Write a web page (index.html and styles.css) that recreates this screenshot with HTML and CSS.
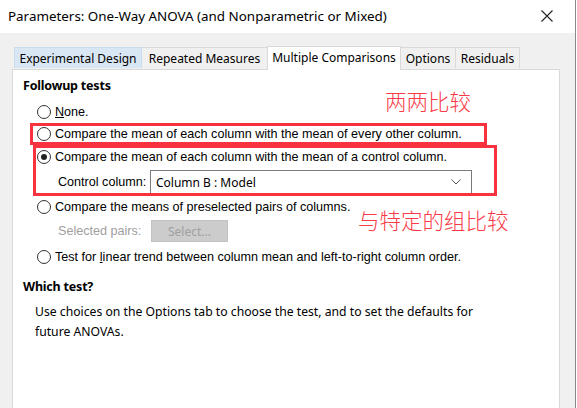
FILE: index.html
```html
<!DOCTYPE html>
<html lang="en">
  <head>
    <meta charset="UTF-8" />
    <title>Parameters: One-Way ANOVA</title>
    <link rel="stylesheet" href="styles.css">
  </head>
  <body>
    <div class="dialog">
      <div class="titlebar">
        <span class="title">Parameters: One-Way ANOVA (and Nonparametric or Mixed)</span>
        <svg class="close" width="12" height="12" viewBox="0 0 12 12">
          <path d="M0.5 0.5 L11.5 11.5 M11.5 0.5 L0.5 11.5" stroke="#222" stroke-width="1.1" fill="none" />
        </svg>
      </div>

      <div class="client">
        <!-- Onglets -->
        <div class="tabs">
          <div class="tab tab-hover tab-ed">Experimental Design</div>
          <div class="tab tab-rm">Repeated Measures</div>
          <div class="tab tab-active tab-mc">Multiple Comparisons</div>
          <div class="tab tab-op">Options</div>
          <div class="tab tab-re">Residuals</div>
        </div>

        <div class="panel">
          <h2 class="group-title">Followup tests</h2>

          <div class="option opt-none">
            <span class="radio"></span>
            <span class="label"><u>N</u>one.</span>
          </div>
          <div class="option opt-all">
            <span class="radio"></span>
            <span class="label">Compare the mean of each column with the mean of every other column.</span>
          </div>
          <div class="option opt-control">
            <span class="radio checked"></span>
            <span class="label">Compare the mean of each column with the mean of a control column.</span>
          </div>
          <div class="sub sub-control">
            <span class="sub-label">Control column:</span>
            <div class="select">
              <span>Column B : Model</span>
              <svg class="chevron" width="10" height="6" viewBox="0 0 10 6">
                <path d="M0.5 0.5 L5 5 L9.5 0.5" stroke="#555" stroke-width="1" fill="none" />
              </svg>
            </div>
          </div>
          <div class="option opt-pairs">
            <span class="radio"></span>
            <span class="label">Compare the means of preselected pairs of columns.</span>
          </div>
          <div class="sub sub-pairs">
            <span class="sub-label disabled">Selected pairs:</span>
            <div class="button-disabled">Select...</div>
          </div>
          <div class="option opt-trend">
            <span class="radio"></span>
            <span class="label">Test for <u>l</u>inear trend between column mean and left-to-right column order.</span>
          </div>

          <h2 class="group-title which">Which test?</h2>
          <p class="help">Use choices on the Options tab to choose the test, and to set the defaults for<br>future ANOVAs.</p>

          <!-- Annotations rouges -->
          <div class="mark mark-all"></div>
          <div class="mark mark-control"></div>
          <div class="note note-all">两两比较</div>
          <div class="note note-control">与特定的组比较</div>
        </div>
      </div>
    </div>
  </body>
</html>
```

FILE: styles.css
```css
* {
  margin: 0;
  padding: 0;
  box-sizing: border-box;
}

body {
  width: 577px;
  height: 408px;
  overflow: hidden;
  background: #fff;
  font-family: "Liberation Sans", Arial, sans-serif;
  color: #000;
}

.dialog {
  width: 576px;
  height: 408px;
  border-right: 1px solid #8a8a8a;
  display: flex;
  flex-direction: column;
}

/* Barre de titre */
.titlebar {
  height: 33px;
  flex-shrink: 0;
  background: #fff;
  display: flex;
  align-items: center;
  justify-content: space-between;
  padding: 0 22px 2px 8px;
}
.title {
  font-family: "Noto Sans", sans-serif;
  font-size: 13.4px;
  color: #000;
}

/* Zone client */
.client {
  flex-grow: 1;
  background: #f0f0f0;
  padding: 13px 0 0 12px;
  display: flex;
  flex-direction: column;
}

/* Onglets */
.tabs {
  display: flex;
  align-items: flex-end;
  padding-left: 2px;
  position: relative;
  z-index: 1;
}
.tab {
  height: 21px;
  margin-bottom: 1px;
  border: 1px solid #d9d9d9;
  border-bottom: none;
  border-left: none;
  background: #f0f0f0;
  font-family: "Noto Sans", sans-serif;
  font-size: 12px;
  display: flex;
  align-items: center;
  justify-content: center;
  color: #000;
}
.tab-ed { width: 128px; border-left: 1px solid #d9d9d9; }
.tab-rm { width: 126px; }
.tab-mc { width: 134px; }
.tab-op { width: 55px; }
.tab-re { width: 64px; }
.tab-hover {
  background: #d9e7f4;
  border-color: #c9dcee;
}
.tab-active {
  height: 24px;
  margin-bottom: -1px;
  background: #fff;
  border-left: 1px solid #d9d9d9;
  margin-left: -1px;
  align-items: flex-start;
  padding-top: 2px;
}

/* Panneau */
.panel {
  position: relative;
  width: 548px;
  flex-grow: 1;
  background: #fff;
  border: 1px solid #d9d9d9;
  border-bottom: none;
  padding: 6px 0 0 10px;
}

.group-title {
  font-family: "Noto Sans", sans-serif;
  font-size: 12.5px;
  font-weight: 700;
  height: 20px;
  line-height: 20px;
  letter-spacing: -0.2px;
}

.option {
  height: 22px;
  display: flex;
  align-items: center;
  margin-left: 14px;
  font-size: 12.6px;
}
.opt-none { margin-top: 5px; }
.opt-control { margin-top: 1px; }
.opt-pairs { margin-top: 2px; }
.opt-trend { margin-top: 4px; }

.radio {
  width: 14px;
  height: 14px;
  border: 1px solid #333;
  border-radius: 50%;
  background: #fff;
  margin-right: 4px;
  display: flex;
  align-items: center;
  justify-content: center;
  flex-shrink: 0;
}
.radio.checked::after {
  content: "";
  width: 6px;
  height: 6px;
  border-radius: 50%;
  background: #222;
}

.sub {
  display: flex;
  align-items: center;
  height: 24px;
  margin-left: 35px;
  font-size: 12.6px;
}
.sub-control { margin-top: 2px; }
.sub-pairs { margin-top: 2px; height: 22px; }
.sub-label {
  width: 92px;
  flex-shrink: 0;
}
.sub-label.disabled {
  color: #a0a0a0;
}

.select {
  width: 322px;
  height: 24px;
  border: 1px solid #7a7a7a;
  background: #fff;
  display: flex;
  align-items: center;
  justify-content: space-between;
  padding: 0 10px 0 5px;
  font-family: "Noto Sans", sans-serif;
  font-size: 12px;
}

.button-disabled {
  width: 77px;
  height: 22px;
  background: #cccccc;
  border: 1px solid #c2c2c2;
  color: #a0a0a0;
  font-family: "Noto Sans", sans-serif;
  font-size: 12px;
  display: flex;
  align-items: center;
  justify-content: center;
  margin-left: 1px;
}

.which {
  margin-top: 9px;
}

.help {
  margin: 5px 0 0 12px;
  font-family: "Noto Sans", sans-serif;
  font-size: 12.2px;
  line-height: 20px;
}

/* Cadres et notes rouges */
.mark {
  position: absolute;
  border: 3px solid #f8323f;
  pointer-events: none;
}
.mark-all {
  left: 17px;
  top: 53px;
  width: 457px;
  height: 22px;
}
.mark-control {
  left: 20px;
  top: 75px;
  width: 464px;
  height: 51px;
}
.note {
  position: absolute;
  font-family: "Noto Sans CJK SC", sans-serif;
  font-weight: 300;
  font-size: 21.5px;
  line-height: 24px;
  color: #fa3a47;
}
.note-all {
  left: 372px;
  top: 19px;
}
.note-control {
  left: 345px;
  top: 138px;
}
```
